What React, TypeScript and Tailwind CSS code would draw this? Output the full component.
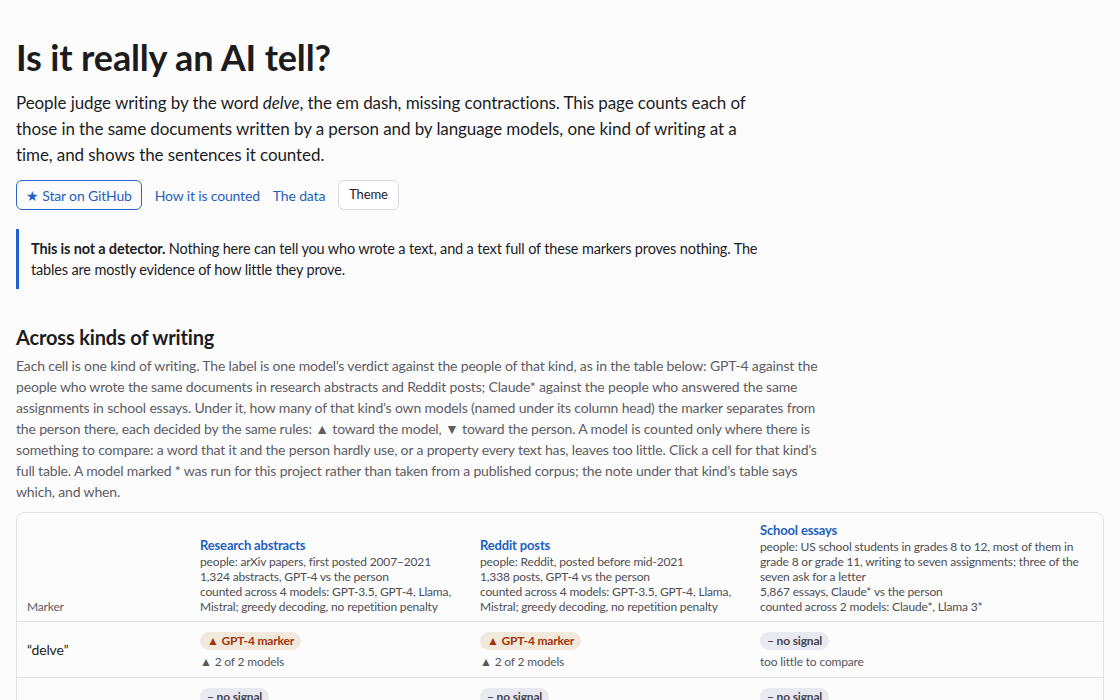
type Verdict = { kind: "model" | "none"; label: string; note: string };

type Row = { marker: string; cells: Verdict[] };

const KINDS = [
  {
    name: "Research abstracts",
    lines: [
      "people: arXiv papers, first posted 2007–2021",
      "1,324 abstracts, GPT-4 vs the person",
      "counted across 4 models: GPT-3.5, GPT-4, Llama, Mistral; greedy decoding, no repetition penalty",
    ],
  },
  {
    name: "Reddit posts",
    lines: [
      "people: Reddit, posted before mid-2021",
      "1,338 posts, GPT-4 vs the person",
      "counted across 4 models: GPT-3.5, GPT-4, Llama, Mistral; greedy decoding, no repetition penalty",
    ],
  },
  {
    name: "School essays",
    lines: [
      "people: US school students in grades 8 to 12, most of them in grade 8 or grade 11, writing to seven assignments; three of the seven ask for a letter",
      "5,867 essays, Claude* vs the person",
      "counted across 2 models: Claude*, Llama 3*",
    ],
  },
];

const ROWS: Row[] = [
  {
    marker: "“delve”",
    cells: [
      { kind: "model", label: "▲ GPT-4 marker", note: "▲ 2 of 2 models" },
      { kind: "model", label: "▲ GPT-4 marker", note: "▲ 2 of 2 models" },
      { kind: "none", label: "– no signal", note: "too little to compare" },
    ],
  },
  {
    marker: "“em dash”",
    cells: [
      { kind: "none", label: "– no signal", note: "1 of 4 models" },
      { kind: "none", label: "– no signal", note: "1 of 4 models" },
      { kind: "none", label: "– no signal", note: "0 of 2 models" },
    ],
  },
  {
    marker: "no contractions",
    cells: [
      { kind: "model", label: "▲ GPT-4 marker", note: "▲ 3 of 4 models" },
      { kind: "none", label: "– no signal", note: "2 of 4 models" },
      { kind: "none", label: "– no signal", note: "1 of 2 models" },
    ],
  },
];

function Badge({ v }: { v: Verdict }) {
  return (
    <span
      className={
        v.kind === "model"
          ? "inline-flex h-[18px] items-center rounded-full bg-[#f0e9dc] px-[7px] text-[12px] font-bold leading-none text-[#a3330e]"
          : "inline-flex h-[18px] items-center rounded-full bg-[#e9e9f1] px-[7px] text-[12px] font-bold leading-none text-[#46464f]"
      }
    >
      {v.label}
    </span>
  );
}

export default function App() {
  return (
    <div
      className="min-h-screen bg-[#fcfcfd] px-4 pb-10 pt-[33px] tracking-[-0.01em] text-[#1c1c1f]"
      style={{ fontFamily: "Lato, 'Noto Sans', sans-serif" }}
    >
      <h1 className="text-[36px] font-bold leading-[48px]">Is it really an AI tell?</h1>

      <p className="mt-[9px] max-w-[736px] text-[17px] leading-[26px] tracking-[-0.005em]">
        People judge writing by the word <em>delve</em>, the em dash, missing contractions. This page
        counts each of those in the same documents written by a person and by language models, one
        kind of writing at a time, and shows the sentences it counted.
      </p>

      <div className="mt-[12px] flex items-center gap-[13px] text-[14px]">
        <a
          href="#"
          className="flex h-[30px] items-center rounded-md border border-[#2a66c9] px-[9px] text-[#1f5fbf]"
        >
          ★ Star on GitHub
        </a>
        <a href="#" className="text-[#1f5fbf]">
          How it is counted
        </a>
        <a href="#" className="text-[#1f5fbf]">
          The data
        </a>
        <button className="flex h-[30px] items-center rounded-md border border-[#dadade] bg-white px-[10px] text-[13px] text-[#1c1c1f]">
          Theme
        </button>
      </div>

      <div className="mt-[19px] max-w-[770px] border-l-[3px] border-[#1f62c9] py-[9px] pl-[12px] text-[14.5px] leading-[21px]">
        <strong className="font-bold">This is not a detector.</strong> Nothing here can tell you who
        wrote a text, and a text full of these markers proves nothing. The tables are mostly evidence
        of how little they prove.
      </div>

      <h2 className="mt-[35px] text-[20px] font-bold leading-[26px]">Across kinds of writing</h2>
      <p className="mt-[5px] max-w-[812px] text-[14px] leading-[21px] text-[#5d5d63]">
        Each cell is one kind of writing. The label is one model’s verdict against the people of that
        kind, as in the table below: GPT-4 against the people who wrote the same documents in
        research abstracts and Reddit posts; Claude* against the people who answered the same
        assignments in school essays. Under it, how many of that kind’s own models (named under its
        column head) the marker separates from the person there, each decided by the same rules: ▲
        toward the model, ▼ toward the person. A model is counted only where there is something to
        compare: a word that it and the person hardly use, or a property every text has, leaves too
        little. Click a cell for that kind’s full table. A model marked * was run for this project
        rather than taken from a published corpus; the note under that kind’s table says which, and
        when.
      </p>

      <div className="mt-[10px] overflow-hidden rounded-lg border border-[#e2e2e7]">
        <div className="grid grid-cols-[173px_280px_280px_1fr] items-end border-b border-[#e2e2e7]">
          <div className="px-[10px] pb-[7px] text-[12px] leading-[15px] text-[#5b5b60]">Marker</div>
          {KINDS.map((k) => (
            <div key={k.name} className="px-[10px] pb-[7px] pt-[9px]">
              <div className="text-[13px] font-bold leading-[17px] text-[#1f5fbf]">{k.name}</div>
              {k.lines.map((l) => (
                <div key={l} className="text-[12px] leading-[15px] text-[#4e4e54]">
                  {l}
                </div>
              ))}
            </div>
          ))}
        </div>
        {ROWS.map((r) => (
          <div
            key={r.marker}
            className="grid grid-cols-[173px_280px_280px_1fr] border-b border-[#e2e2e7] last:border-b-0"
          >
            <div className="flex items-center px-[10px] text-[14px] text-[#1c1c1f]">{r.marker}</div>
            {r.cells.map((c, i) => (
              <div key={i} className="flex flex-col items-start px-[10px] pb-[7px] pt-[10px]">
                <Badge v={c} />
                <div className="mt-[4px] text-[12px] leading-[16px] text-[#55555b]">{c.note}</div>
              </div>
            ))}
          </div>
        ))}
      </div>
    </div>
  );
}
